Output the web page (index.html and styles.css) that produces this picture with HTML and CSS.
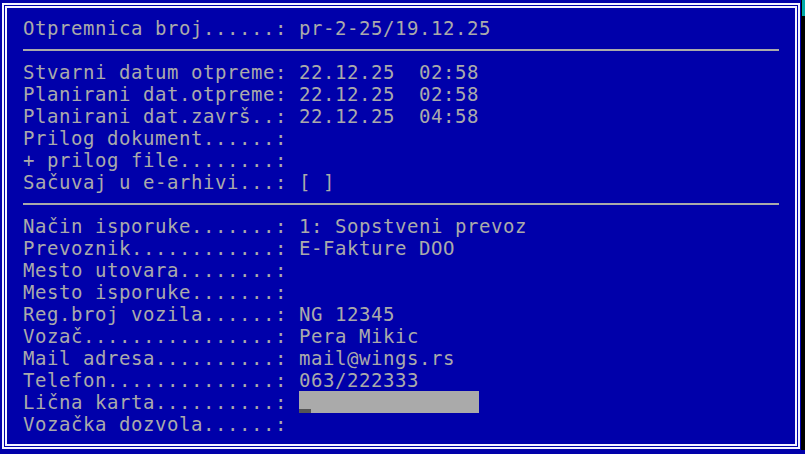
FILE: index.html
```html
<!DOCTYPE html>
<html>
<head>
<meta charset="utf-8">
<link rel="stylesheet" href="styles.css">
</head>
<body>
<div class="screen">
  <div class="frame">
    <div class="inner">
      <div class="row">Otpremnica broj......: pr-2-25/19.12.25</div>
      <div class="sep"><div class="rule"></div></div>
      <div class="row">Stvarni datum otpreme: 22.12.25  02:58</div>
      <div class="row">Planirani dat.otpreme: 22.12.25  02:58</div>
      <div class="row">Planirani dat.završ..: 22.12.25  04:58</div>
      <div class="row">Prilog dokument......: </div>
      <div class="row">+ prilog file........: </div>
      <div class="row">Sačuvaj u e-arhivi...: [ ]</div>
      <div class="sep"><div class="rule"></div></div>
      <div class="row">Način isporuke.......: 1: Sopstveni prevoz</div>
      <div class="row">Prevoznik............: E-Fakture DOO</div>
      <div class="row">Mesto utovara........: </div>
      <div class="row">Mesto isporuke.......: </div>
      <div class="row">Reg.broj vozila......: NG 12345</div>
      <div class="row">Vozač................: Pera Mikic</div>
      <div class="row">Mail adresa..........: mail@wings.rs</div>
      <div class="row">Telefon..............: 063/222333</div>
      <div class="row">Lična karta..........: <span class="field"><span class="cursor"></span></span></div>
      <div class="row">Vozačka dozvola......: </div>
    </div>
  </div>
  <div class="shadow"><div class="shadow-top"></div></div>
</div>
</body>
</html>
```
FILE: styles.css
```css
html, body {
  margin: 0;
  padding: 0;
  background: #0000aa;
  width: 805px;
  height: 454px;
  overflow: hidden;
}

.screen {
  display: flex;
  align-items: flex-start;
}

.frame {
  margin: 3px 0 0 2px;
  width: 798px;
  height: 446px;
  box-sizing: border-box;
  border: 2px solid #f4f4ff;
  padding: 1px;
}

.inner {
  height: 100%;
  box-sizing: border-box;
  border: 2px solid #f4f4ff;
  padding: 9px 0 0 16px;
  font-family: "DejaVu Sans Mono", monospace;
  font-size: 19px;
  letter-spacing: 0.56px;
  color: #aaaaaa;
}

.row {
  height: 22px;
  line-height: 22px;
  white-space: pre;
  display: flex;
  align-items: stretch;
}

.sep {
  height: 22px;
  display: flex;
  align-items: flex-start;
}

.rule {
  margin-top: 10px;
  width: 756px;
  height: 2px;
  background: #aaaaaa;
}

.field {
  display: flex;
  align-items: flex-end;
  width: 180px;
  height: 22px;
  background: #aaaaaa;
}

.cursor {
  width: 12px;
  height: 4px;
  background: #555555;
}

.shadow {
  margin-left: 1px;
  width: 4px;
  height: 450px;
  background: #000000;
  display: flex;
  justify-content: flex-end;
}

.shadow-top {
  width: 3px;
  height: 16px;
  background: #00aaaa;
}
```
